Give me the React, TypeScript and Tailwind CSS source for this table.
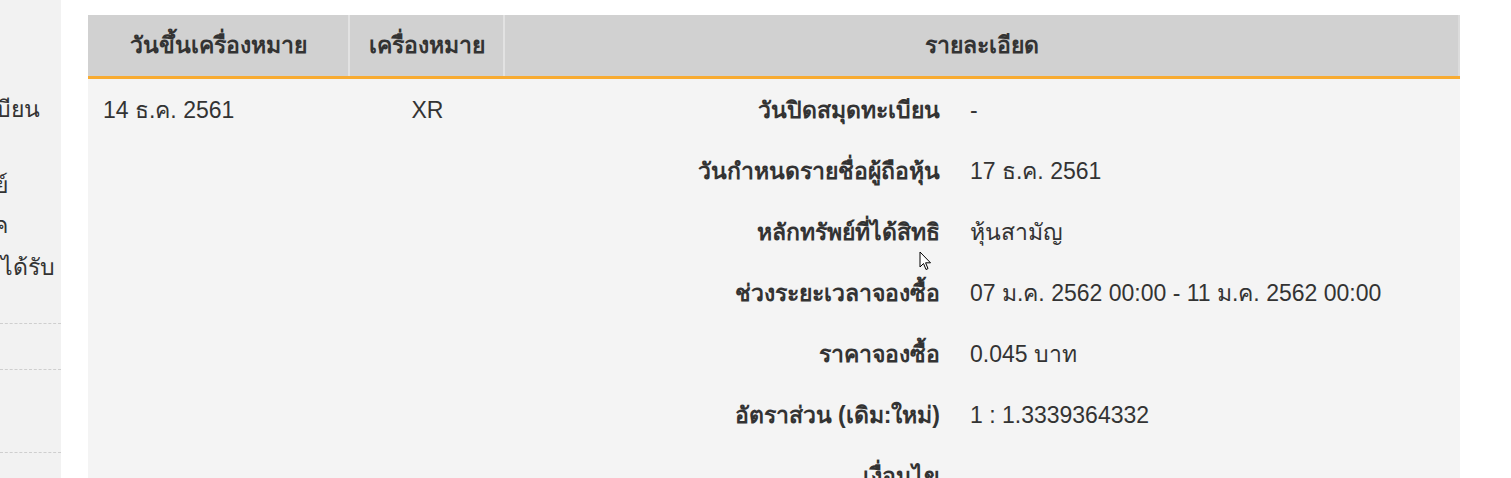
const SIDE_ITEMS = [
  { text: "วันปิดสมุดทะเบียน", end: 40, top: "mt-[95px]" },
  { text: "หลักทรัพย์", end: 8, top: "mt-[48px]" },
  { text: "ตัวแทนจำหน่ายในภูมิภาค", end: 8, top: "mt-[12px]" },
  { text: "สิทธิที่ผู้ถือหุ้นมีสิทธิจะได้รับจากมูลค่าได้รับ", end: 55, top: "mt-[14px]" },
];

const DETAILS = [
  { label: "วันปิดสมุดทะเบียน", value: "-" },
  { label: "วันกำหนดรายชื่อผู้ถือหุ้น", value: "17 ธ.ค. 2561" },
  { label: "หลักทรัพย์ที่ได้สิทธิ", value: "หุ้นสามัญ" },
  { label: "ช่วงระยะเวลาจองซื้อ", value: "07 ม.ค. 2562 00:00 - 11 ม.ค. 2562 00:00" },
  { label: "ราคาจองซื้อ", value: "0.045 บาท" },
  { label: "อัตราส่วน (เดิม:ใหม่)", value: "1 : 1.3339364332" },
  { label: "เงื่อนไข", value: "" },
];

function Cursor() {
  return (
    <svg
      className="absolute left-[919px] top-[251px]"
      width="13"
      height="21"
      viewBox="0 0 13 21"
    >
      <path
        d="M1 1 L1 16 L4.5 12.5 L7 18.5 L9 17.6 L6.6 11.8 L11.5 11.8 Z"
        fill="#fff"
        stroke="#000"
        strokeWidth="1"
        strokeLinejoin="round"
      />
    </svg>
  );
}

export default function App() {
  return (
    <div
      className="relative flex h-[478px] w-[1511px] overflow-hidden bg-white text-[#333]"
      style={{ fontFamily: '"Liberation Sans", Tahoma, "Noto Sans", "DejaVu Sans", sans-serif' }}
    >
      {/* sidebar, scrolled off to the left */}
      <aside className="flex w-[61px] shrink-0 flex-col overflow-hidden bg-[#f2f2f2] text-[23px]">
        {SIDE_ITEMS.map((item) => (
          <div
            key={item.text}
            className={`flex justify-end whitespace-nowrap leading-[28px] ${item.top}`}
            style={{ width: item.end }}
          >
            <span className="shrink-0">{item.text}</span>
          </div>
        ))}
        <div className="mt-[42px] border-b border-dashed border-[#cfcfcf]" />
        <div className="mt-[45px] border-b border-dashed border-[#cfcfcf]" />
        <div className="mt-[82px] border-b border-dashed border-[#cfcfcf]" />
      </aside>

      <main className="ml-[27px] mt-[15px] w-[1372px] shrink-0">
        <div className="flex h-[61px] bg-[#d1d1d1] text-[23px] font-bold">
          <div className="flex w-[262px] items-center justify-center border-r-2 border-[#e2e2e2]">
            วันขึ้นเครื่องหมาย
          </div>
          <div className="flex w-[155px] items-center justify-center border-r-2 border-[#e2e2e2]">
            เครื่องหมาย
          </div>
          <div className="flex flex-1 items-center justify-center border-r-2 border-[#dcdcdc]">
            รายละเอียด
          </div>
        </div>
        <div className="h-[3px] bg-[#f8ab31]" />

        <div className="flex h-[400px] bg-[#f4f4f4] text-[23px]">
          <div className="w-[262px] pl-[15px] pt-[17px] leading-[28px]">14 ธ.ค. 2561</div>
          <div className="w-[155px] pt-[17px] text-center leading-[28px]">XR</div>
          <div className="flex-1">
            {DETAILS.map((row) => (
              <div key={row.label} className="flex h-[61px] items-center leading-[28px]">
                <div className="w-[435px] text-right font-bold">{row.label}</div>
                <div className="pl-[30px]">{row.value}</div>
              </div>
            ))}
          </div>
        </div>
      </main>

      <Cursor />
    </div>
  );
}
